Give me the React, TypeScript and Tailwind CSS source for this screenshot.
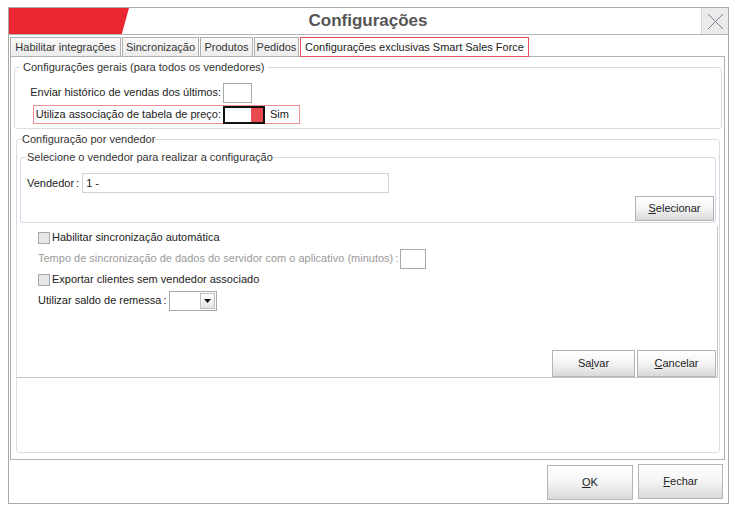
import React from "react";

const Btn = ({ children, className = "" }: { children: React.ReactNode; className?: string }) => (
  <div
    className={`flex items-center justify-center border border-[#b4b4b4] bg-gradient-to-b from-[#ffffff] via-[#f4f4f4] to-[#d9d9d9] text-[11px] text-[#222] ${className}`}
  >
    {children}
  </div>
);

const Check = ({ label }: { label: string }) => (
  <div className="flex items-center h-[21px]">
    <div className="w-[12px] h-[12px] border border-[#a8a8a8] bg-[#e6e6e6] mr-[2px]" />
    <span>{label}</span>
  </div>
);

export default function App() {
  return (
    <div className="w-[739px] h-[514px] bg-white font-['Liberation_Sans',Arial,sans-serif] text-[11px] text-[#222] pt-[7px] pl-[8px]">
      <div className="w-[721px] h-[497px] border border-[#a9a9a9] flex flex-col bg-white">
        {/* Title bar */}
        <div className="h-[27px] border-b border-[#b5b5b5] flex items-stretch">
          <div className="w-[120px] bg-[#ea2630] [clip-path:polygon(0_0,100%_0,94%_100%,0_100%)]" />
          <div className="flex-1 flex items-center justify-center text-[17px] font-bold text-[#555] pr-[94px]">
            Configurações
          </div>
          <div className="w-[27px] bg-[#ebebeb] border-l border-[#d8d8d8] flex items-center justify-center">
            <svg width="17" height="17" viewBox="0 0 17 17">
              <path d="M1 1L16 16M16 1L1 16" stroke="#7d8290" strokeWidth="1" fill="none" />
            </svg>
          </div>
        </div>

        {/* Tabs */}
        <div className="flex items-end h-[21px] pl-[1px]">
          {[
            ["Habilitar integrações", "w-[111px]"],
            ["Sincronização", "w-[77px]"],
            ["Produtos", "w-[53px]"],
            ["Pedidos", "w-[45px]"],
          ].map(([t, w]) => (
            <div
              key={t}
              className={`${w} h-[19px] mr-[1px] border border-b-0 border-[#b0b0b0] bg-gradient-to-b from-[#fafafa] to-[#ececec] flex items-center justify-center text-[#333]`}
            >
              {t}
            </div>
          ))}
          <div className="w-[229px] h-[20px] border border-[#e5545c] bg-white flex items-center justify-center text-[#222] mb-[-1px] relative">
            Configurações exclusivas Smart Sales Force
          </div>
        </div>

        {/* Tab panel */}
        <div className="ml-[1px] w-[715px] h-[404px] border border-[#b0b0b0] flex flex-col px-[3px]">
          {/* Group 1 */}
          <fieldset className="mt-[4px] w-[708px] h-[68px] border border-[#d6dde5] rounded-[3px] px-[1px]">
            <legend className="ml-[4px] px-[3px] leading-[13px] text-[#333]">
              Configurações gerais (para todos os vendedores)
            </legend>
            <div className="flex items-center h-[19px] mt-[9px]">
              <div className="w-[207px] text-right pr-[2px]">Enviar histórico de vendas dos últimos:</div>
              <div className="w-[29px] h-[20px] border border-[#a8a8a8] bg-white" />
            </div>
            <div className="flex items-center h-[19px] mt-[3px] ml-[17px] w-[267px] border border-[#ee8f94]">
              <div className="w-[189px] text-right pr-[2px]">Utiliza associação de tabela de preço:</div>
              <div className="w-[42px] h-[18px] border-2 border-[#111] bg-white flex justify-end">
                <div className="w-[12px] h-full bg-[#e84a50]" />
              </div>
              <span className="ml-[5px]">Sim</span>
            </div>
          </fieldset>

          {/* Group 2 */}
          <fieldset className="mt-[4px] ml-[2px] w-[704px] h-[320px] border border-[#d6dde5] rounded-[3px] flex flex-col">
            <legend className="ml-[5px] leading-[13px] text-[#333]">Configuração por vendedor</legend>
            <fieldset className="mx-[3px] mt-[5px] h-[72px] border border-[#d6dde5] rounded-[3px] flex flex-col">
              <legend className="ml-[6px] leading-[13px] text-[#333]">
                Selecione o vendedor para realizar a configuração
              </legend>
              <div className="flex items-center mt-[9px] ml-[6px]">
                <span className="mr-[3px]">
                  Vendedor<span className="ml-[2px]">:</span>
                </span>
                <div className="w-[307px] h-[20px] border border-[#d2d2d2] flex items-center pl-[3px]">1 -</div>
              </div>
              <div className="flex justify-end mt-[3px] mr-[1px]">
                <Btn className="w-[79px] h-[25px]">
                  <span>
                    <span className="underline">S</span>elecionar
                  </span>
                </Btn>
              </div>
            </fieldset>
            <div className="mt-[3px] mr-[1px] h-[152px] border-r border-b border-[#c4c4c4] flex flex-col pl-[21px] pt-[1px]">
              <Check label="Habilitar sincronização automática" />
              <div className="flex items-center h-[21px] text-[#9a9a9a]">
                <span className="mr-[2px]">
                  Tempo de sincronização de dados do servidor com o aplicativo (minutos)<span className="ml-[2px]">:</span>
                </span>
                <div className="w-[26px] h-[20px] border border-[#a8a8a8] bg-white" />
              </div>
              <Check label="Exportar clientes sem vendedor associado" />
              <div className="flex items-center h-[21px]">
                <span className="mr-[2px]">
                  Utilizar saldo de remessa<span className="ml-[2px]">:</span>
                </span>
                <div className="w-[48px] h-[20px] border border-[#a8a8a8] bg-white flex justify-end p-[1px]">
                  <div className="w-[15px] h-full border border-[#c0c0c0] bg-gradient-to-b from-white to-[#e4e4e4] flex items-center justify-center">
                    <svg width="7" height="4" viewBox="0 0 7 4">
                      <path d="M0 0H7L3.5 4Z" fill="#111" />
                    </svg>
                  </div>
                </div>
              </div>
              <div className="flex-1" />
              <div className="flex justify-end gap-[2px] mr-[1px]">
                <Btn className="w-[83px] h-[27px]">
                  <span>
                    Sa<span className="underline">l</span>var
                  </span>
                </Btn>
                <Btn className="w-[79px] h-[27px]">
                  <span>
                    <span className="underline">C</span>ancelar
                  </span>
                </Btn>
              </div>
            </div>
          </fieldset>
        </div>

        {/* Bottom buttons */}
        <div className="flex justify-end items-start gap-[5px] pr-[5px] pt-[4px]">
          <Btn className="w-[86px] h-[35px] mt-[1px]">
            <span>
              <span className="underline">O</span>K
            </span>
          </Btn>
          <Btn className="w-[85px] h-[35px]">
            <span>
              <span className="underline">F</span>echar
            </span>
          </Btn>
        </div>
      </div>
    </div>
  );
}
